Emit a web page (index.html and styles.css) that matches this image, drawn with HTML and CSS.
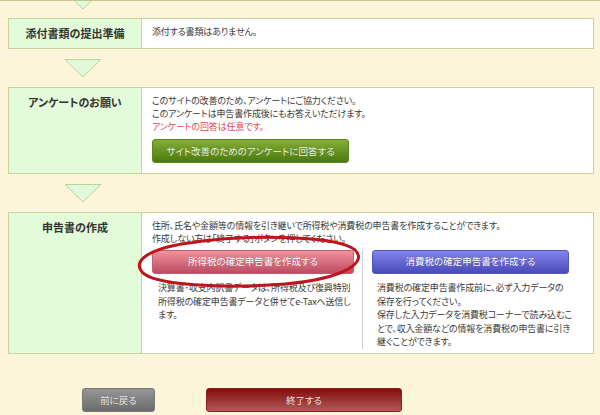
FILE: index.html
```html
<!DOCTYPE html>
<html lang="ja">
<head>
    <meta charset="UTF-8">
    <title>申告書の作成</title>
    <link rel="stylesheet" href="styles.css">
</head>
<body>
    <div class="flow">
        <div class="edge"></div>
        <div class="arrow arrow-cut">
            <svg width="38" height="8" viewBox="0 10 38 8"><polygon points="1,0.5 37,0.5 19,18" /></svg>
        </div>

        <div class="step">
            <div class="step-label">添付書類の提出準備</div>
            <div class="step-body">
                <p>添付する書類はありません。</p>
            </div>
        </div>

        <div class="arrow">
            <svg width="38" height="19" viewBox="0 0 38 19"><polygon points="1,0.5 37,0.5 19,18" /></svg>
        </div>

        <div class="step">
            <div class="step-label">アンケートのお願い</div>
            <div class="step-body">
                <p>このサイトの改善のため、アンケートにご協力ください。</p>
                <p>このアンケートは申告書作成後にもお答えいただけます。</p>
                <p class="note">アンケートの回答は任意です。</p>
                <a href="#" class="btn btn-green">サイト改善のためのアンケートに回答する</a>
            </div>
        </div>

        <div class="arrow">
            <svg width="38" height="19" viewBox="0 0 38 19"><polygon points="1,0.5 37,0.5 19,18" /></svg>
        </div>

        <div class="step">
            <div class="step-label">申告書の作成</div>
            <div class="step-body">
                <p>住所、氏名や金額等の情報を引き継いで所得税や消費税の申告書を作成することができます。</p>
                <p>作成しない方は「終了する」ボタンを押してください。</p>
                <div class="choices">
                    <div class="choice choice-left">
                        <a href="#" class="btn btn-pink">所得税の確定申告書を作成する</a>
                        <p>決算書･収支内訳書データは、所得税及び復興特別所得税の確定申告書データと併せてe-Taxへ送信します。</p>
                    </div>
                    <div class="choice choice-right">
                        <a href="#" class="btn btn-blue">消費税の確定申告書を作成する</a>
                        <p>消費税の確定申告書作成前に、必ず入力データの<br>保存を行ってください。</p>
                        <p>保存した入力データを消費税コーナーで読み込むこ<br>とで、収入金額などの情報を消費税の申告書に引き<br>継ぐことができます。</p>
                    </div>
                </div>
                <svg class="mark" width="230" height="60" viewBox="0 0 230 60">
                    <path d="M 58 9 C 120 1, 204 3, 220 17 C 232 28, 214 45, 150 51 C 88 56, 18 52, 7 39 C -3 28, 14 14, 62 9" />
                </svg>
            </div>
        </div>

        <div class="actions">
            <a href="#" class="btn btn-gray">前に戻る</a>
            <a href="#" class="btn btn-dark">終了する</a>
        </div>
    </div>
</body>
</html>
```

FILE: styles.css
```css
:root {
    --bg-color: #fdf5da;
    --border-color: #c8d49c;
    --label-color: #e2fbd9;
    --text-color: #3a3a3a;
}

body {
    margin: 0;
    background: var(--bg-color);
    color: var(--text-color);
    font-family: "Noto Sans CJK JP", "Noto Sans", sans-serif;
    font-feature-settings: "palt";
}

.flow {
    width: 586px;
    margin-left: 8px;
}

.edge {
    height: 1px;
    margin-left: -8px;
    width: 600px;
    background: #c4c88e;
}

.arrow {
    padding: 10px 0 9px 56px;
    line-height: 0;
}

.arrow-cut {
    padding: 0 0 9px 56px;
}

.arrow polygon {
    fill: #e1f9da;
    stroke: #b9d493;
    stroke-width: 1;
}

.step {
    display: flex;
    border: 1px solid var(--border-color);
    background: #fff;
}

.step-label {
    width: 133px;
    flex: none;
    box-sizing: border-box;
    padding: 7px 4px;
    background: var(--label-color);
    border-right: 1px solid var(--border-color);
    text-align: center;
    font-size: 11px;
    line-height: 14px;
    font-weight: bold;
    color: #333;
}

.step-body {
    flex: 1;
    min-width: 0;
    position: relative;
    padding: 6px 10px 10px 10px;
    font-size: 9px;
    line-height: 13px;
    letter-spacing: -0.15px;
}

.step-body p {
    margin: 0;
}

.note {
    color: #e4485a;
}

.btn {
    display: flex;
    align-items: center;
    justify-content: center;
    height: 24px;
    box-sizing: border-box;
    border-radius: 3px;
    color: #fff;
    font-size: 9.5px;
    letter-spacing: 0;
    text-decoration: none;
    text-shadow: 0 0 1px rgba(0,0,0,0.3);
}

.step-body > .btn {
    margin-top: 6px;
    width: 197px;
}

.btn-green {
    background: linear-gradient(#86ae36, #4a7a0e);
    border: 1px solid #5d8a1c;
    color: #f2f6e6;
}

.btn-pink {
    width: 202px;
    background: linear-gradient(#f2919c, #bb4c62);
    border: 1px solid #c25f72;
}

.btn-blue {
    width: 197px;
    background: linear-gradient(#8484ee, #4a4ab8);
    border: 1px solid #5555c0;
}

.btn-gray {
    width: 73px;
    background: linear-gradient(#969696, #6c6c6c);
    border: 1px solid #777;
    color: #eee;
}

.btn-dark {
    width: 196px;
    background: linear-gradient(#860c0c, #b05a5a);
    border: 1px solid #8c2020;
    color: #f4e6e6;
}

.choices {
    display: flex;
    margin-top: 5px;
    margin-bottom: -6px;
}

.choice {
    box-sizing: border-box;
    line-height: 13.5px;
}

.choice p {
    margin-top: 0;
}

.choice .btn + p {
    margin-top: 7px;
}

.choice-left {
    width: 211px;
    flex: none;
    padding-right: 9px;
    border-right: 1px solid #cfcfcf;
}

.choice-left p {
    padding-left: 6px;
}

.choice-right {
    flex: 1;
    min-width: 0;
    padding-left: 9px;
}

.choice-right p {
    padding-left: 5px;
    white-space: nowrap;
}

.mark {
    position: absolute;
    left: -7px;
    top: 20px;
}

.mark path {
    fill: none;
    stroke: #c0141c;
    stroke-width: 3;
    stroke-linecap: round;
}

.actions {
    display: flex;
    gap: 51px;
    padding: 34px 0 0 74px;
}
```
